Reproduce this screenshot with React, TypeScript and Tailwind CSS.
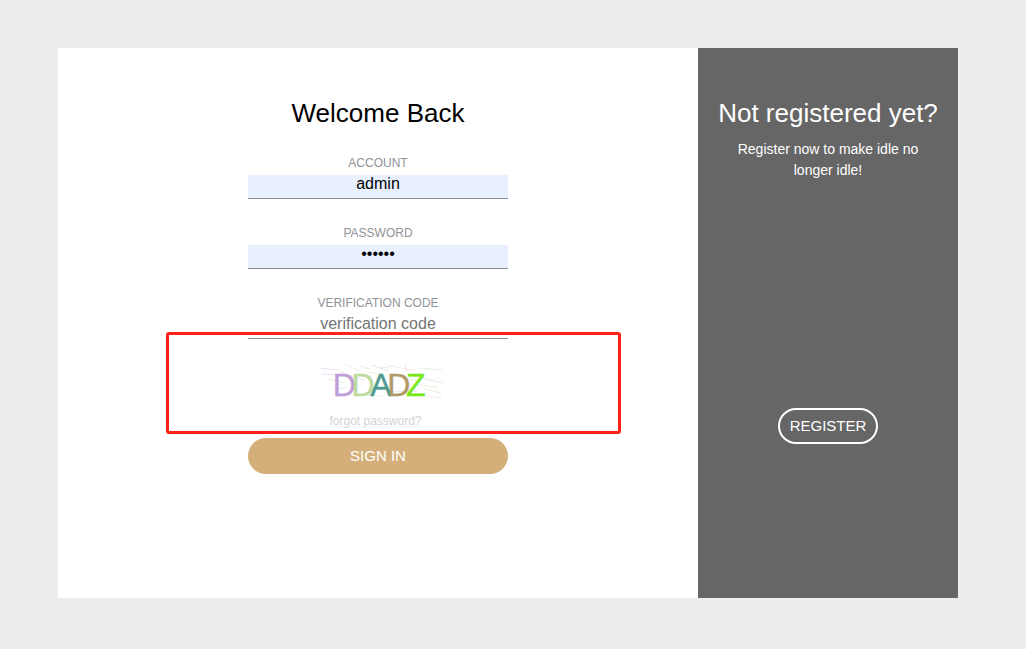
const noise = [
  'M319 368l20 2', 'M327 379l18 4', 'M335 390l12-3', 'M345 364l14 7', 'M365 372l22 3', 'M372 365l16 6',
  'M392 366l24 5', 'M398 376l22 6', 'M405 364l2 8', 'M418 368l24 2', 'M422 378l20 5', 'M425 389l16 4',
  'M352 394l30 2', 'M388 392l30-1', 'M425 396l16 2', 'M340 372l24 8', 'M322 374l14 1', 'M412 384l26 3',
  'M380 368l14-2', 'M360 366l10 3',
];
const noiseColors = ['#e4daee', '#e0ecd4', '#d8e8e4', '#ece4d8', '#e4f4d4', '#e8dcf0', '#f4eadf', '#dde3ee'];

function Field({ label, value, filled, type }: { label: string; value: string; filled?: boolean; type: string }) {
  return (
    <div className="flex flex-col items-center w-[260px]">
      <label className="text-[12px] leading-[14px] mb-[5px] text-[#909399] uppercase">{label}</label>
      <input
        readOnly
        type={type}
        value={filled ? value : undefined}
        placeholder={filled ? undefined : value}
        className={`w-full h-6 pb-[6px] border-b border-[#8e8e9a] text-center text-[16px] leading-[16px] text-black placeholder:text-[#757575] outline-none ${filled ? 'bg-[#e8f0fe]' : 'bg-white'}`}
      />
    </div>
  );
}

export default function App() {
  return (
    <div className="relative w-[1026px] h-[649px] bg-[#ededed] pt-12 pl-[58px] font-['Liberation_Sans',Arial,sans-serif] overflow-hidden">
      <div className="flex w-[900px] h-[550px]">
        <div className="w-[640px] bg-white flex flex-col items-center pt-[48px]">
          <h2 className="text-[26px] leading-[34px] text-black mb-[26px]">Welcome Back</h2>
          <div className="flex flex-col gap-[27px]">
            <Field label="Account" value="admin" type="text" filled />
            <Field label="Password" value="123456" type="password" filled />
            <Field label="Verification Code" value="verification code" type="text" />
          </div>
          <div className="relative w-[124px] h-[40px] mt-[26px] pr-[2px] text-[32px] leading-[40px] flex justify-center tracking-[-4.4px] [-webkit-text-stroke:0.4px] select-none">
            <svg className="absolute left-0 top-0 overflow-visible" width="124" height="40" viewBox="316 365 124 40" fill="none" strokeWidth="0.8">
              {noise.map((d, i) => (
                <path key={i} d={d} stroke={noiseColors[i % noiseColors.length]} />
              ))}
            </svg>
            <span className="relative text-[#c09edb]">D</span>
            <span className="relative text-[#bddb9e]">D</span>
            <span className="relative text-[#4f9a8e]">A</span>
            <span className="relative text-[#b09a68]">D</span>
            <span className="relative text-[#78e81a]">Z</span>
          </div>
          <a className="mt-[9px] mr-[5px] text-[12px] leading-[14px] text-[#d3d3d3]">forgot password?</a>
          <button className="mt-[10px] w-[260px] h-9 rounded-[18px] bg-[#d4af7a] text-white text-[15px]">SIGN IN</button>
        </div>
        <div className="w-[260px] bg-[#666666] flex flex-col items-center pt-[48px] text-white">
          <h2 className="text-[26px] leading-[34px] whitespace-nowrap">Not registered yet?</h2>
          <p className="mt-[9px] w-[200px] text-center text-[14px] leading-[21px]">Register now to make idle no longer idle!</p>
          <button className="mt-[227px] w-[100px] h-9 rounded-[18px] border-2 border-white text-[15px] text-white">REGISTER</button>
        </div>
      </div>
      <div className="absolute left-[166px] top-[332px] w-[455px] h-[102px] rounded-[3px] border-[3px] border-[#ff2017]" />
    </div>
  );
}
